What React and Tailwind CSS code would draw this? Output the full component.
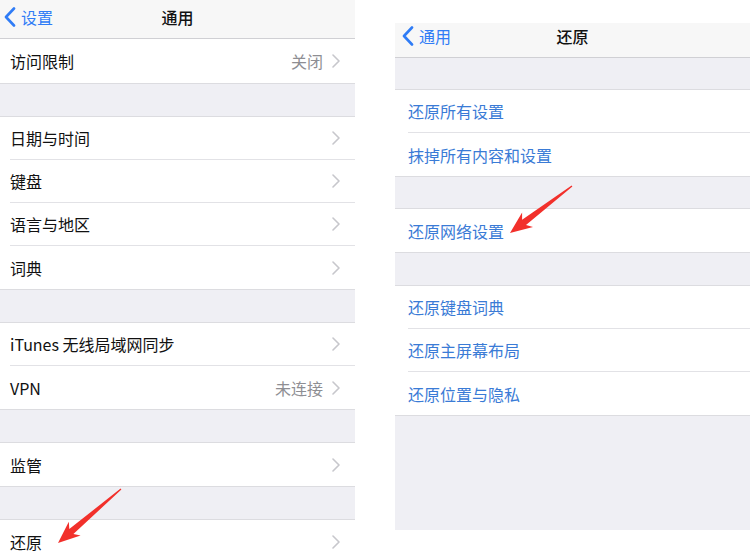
import React from "react";

const font = { fontFamily: '"Noto Sans CJK SC", "Liberation Sans", sans-serif' };

const ChevronRight = () => (
  <svg width="8" height="14" viewBox="0 0 8 14" className="ml-[9px]">
    <path d="M1 1l6 6-6 6" fill="none" stroke="#c7c7cc" strokeWidth="1.6" strokeLinecap="round" strokeLinejoin="round" />
  </svg>
);

const BackChevron = () => (
  <svg width="12" height="20" viewBox="0 0 12 20">
    <path d="M10 1.5L2 10l8 8.5" fill="none" stroke="#2f7cf6" strokeWidth="2.6" strokeLinecap="round" strokeLinejoin="round" />
  </svg>
);

function Group({ children }) {
  return <div className="shrink-0 bg-white border-y border-[#dcdce0]">{children}</div>;
}

function Row({ label, detail, last, blue, inset, h = "h-[43px]" }) {
  return (
    <div className={`flex shrink-0 ${h} items-stretch ${inset}`}>
      <div className={`flex flex-1 items-center pr-[15px] ${last ? "" : "border-b border-[#e2e2e6]"}`}>
        <span className={`flex-1 text-[16px] ${blue ? "text-[#3a7bd6]" : "text-[#111]"}`}>{label}</span>
        {detail && <span className="text-[16px] text-[#8e8e93]">{detail}</span>}
        {!blue && <ChevronRight />}
      </div>
    </div>
  );
}

function Gap({ h = "h-[32px]" }) {
  return <div className={`shrink-0 ${h}`} />;
}

function arrow(tip, tail, headLen, headW, shaftW) {
  const dx = tail[0] - tip[0];
  const dy = tail[1] - tip[1];
  const len = Math.hypot(dx, dy);
  const ux = dx / len, uy = dy / len;
  const nx = -uy, ny = ux;
  const b = [tip[0] + ux * headLen, tip[1] + uy * headLen];
  const n = [tip[0] + ux * headLen * 0.8, tip[1] + uy * headLen * 0.8];
  const pts = [
    tip,
    [b[0] + nx * headW, b[1] + ny * headW],
    [n[0] + nx * shaftW, n[1] + ny * shaftW],
    [tail[0] + nx * 0.6, tail[1] + ny * 0.6],
    [tail[0] - nx * 0.6, tail[1] - ny * 0.6],
    [n[0] - nx * shaftW, n[1] - ny * shaftW],
    [b[0] - nx * headW, b[1] - ny * headW],
  ];
  return pts.map((p) => p.map((v) => v.toFixed(1)).join(",")).join(" ");
}

export default function App() {
  return (
    <div className="relative flex w-[750px] h-[560px] overflow-hidden bg-white" style={font}>
      {/* left screen */}
      <div className="w-[355px] h-[560px] bg-[#efeff4] flex flex-col overflow-hidden">
        <div className="relative shrink-0 h-[39px] pb-[5px] bg-[#f7f7f7] border-b border-[#d0d0d4] flex items-center">
          <div className="flex items-center pl-[4px] gap-[5px]">
            <BackChevron />
            <span className="text-[16px] text-[#2f7cf6]">设置</span>
          </div>
          <span className="absolute left-0 right-0 text-center text-[16px] font-medium text-[#111]">通用</span>
        </div>
        <div className="shrink-0 bg-white border-b border-[#dcdce0]">
          <Row label="访问限制" detail="关闭" last inset="pl-[10px]" h="h-[44px]" />
        </div>
        <Gap />
        <Group>
          <Row label="日期与时间" inset="pl-[10px]" />
          <Row label="键盘" inset="pl-[10px]" />
          <Row label="语言与地区" inset="pl-[10px]" />
          <Row label="词典" last inset="pl-[10px]" />
        </Group>
        <Gap />
        <Group>
          <Row label="iTunes 无线局域网同步" inset="pl-[10px]" />
          <Row label="VPN" detail="未连接" last inset="pl-[10px]" />
        </Group>
        <Gap />
        <Group>
          <Row label="监管" last inset="pl-[10px]" />
        </Group>
        <Gap />
        <Group>
          <Row label="还原" last inset="pl-[10px]" />
        </Group>
      </div>

      {/* right screen */}
      <div className="ml-[40px] mt-[23px] flex-1 h-[507px] bg-[#efeff4] flex flex-col">
        <div className="relative shrink-0 h-[35px] pb-[9px] bg-[#f7f7f7] border-b border-[#d0d0d4] flex items-center">
          <div className="flex items-center pl-[7px] gap-[5px]">
            <BackChevron />
            <span className="text-[16px] text-[#2f7cf6]">通用</span>
          </div>
          <span className="absolute left-0 right-0 text-center text-[16px] font-medium text-[#111]">还原</span>
        </div>
        <Gap h="h-[31px]" />
        <Group>
          <Row label="还原所有设置" blue inset="pl-[13px]" />
          <Row label="抹掉所有内容和设置" blue last inset="pl-[13px]" />
        </Group>
        <Gap h="h-[31px]" />
        <Group>
          <Row label="还原网络设置" blue last inset="pl-[13px]" />
        </Group>
        <Gap h="h-[32px]" />
        <Group>
          <Row label="还原键盘词典" blue inset="pl-[13px]" />
          <Row label="还原主屏幕布局" blue inset="pl-[13px]" />
          <Row label="还原位置与隐私" blue last inset="pl-[13px]" />
        </Group>
      </div>

      {/* red arrows */}
      <svg className="absolute inset-0 pointer-events-none" width="750" height="560" viewBox="0 0 750 560">
        <polygon points={arrow([58, 543], [121, 489], 22, 9, 3.2)} fill="#f2302b" />
        <polygon points={arrow([510, 233], [572, 186], 22, 9, 3.2)} fill="#f2302b" />
      </svg>
    </div>
  );
}
